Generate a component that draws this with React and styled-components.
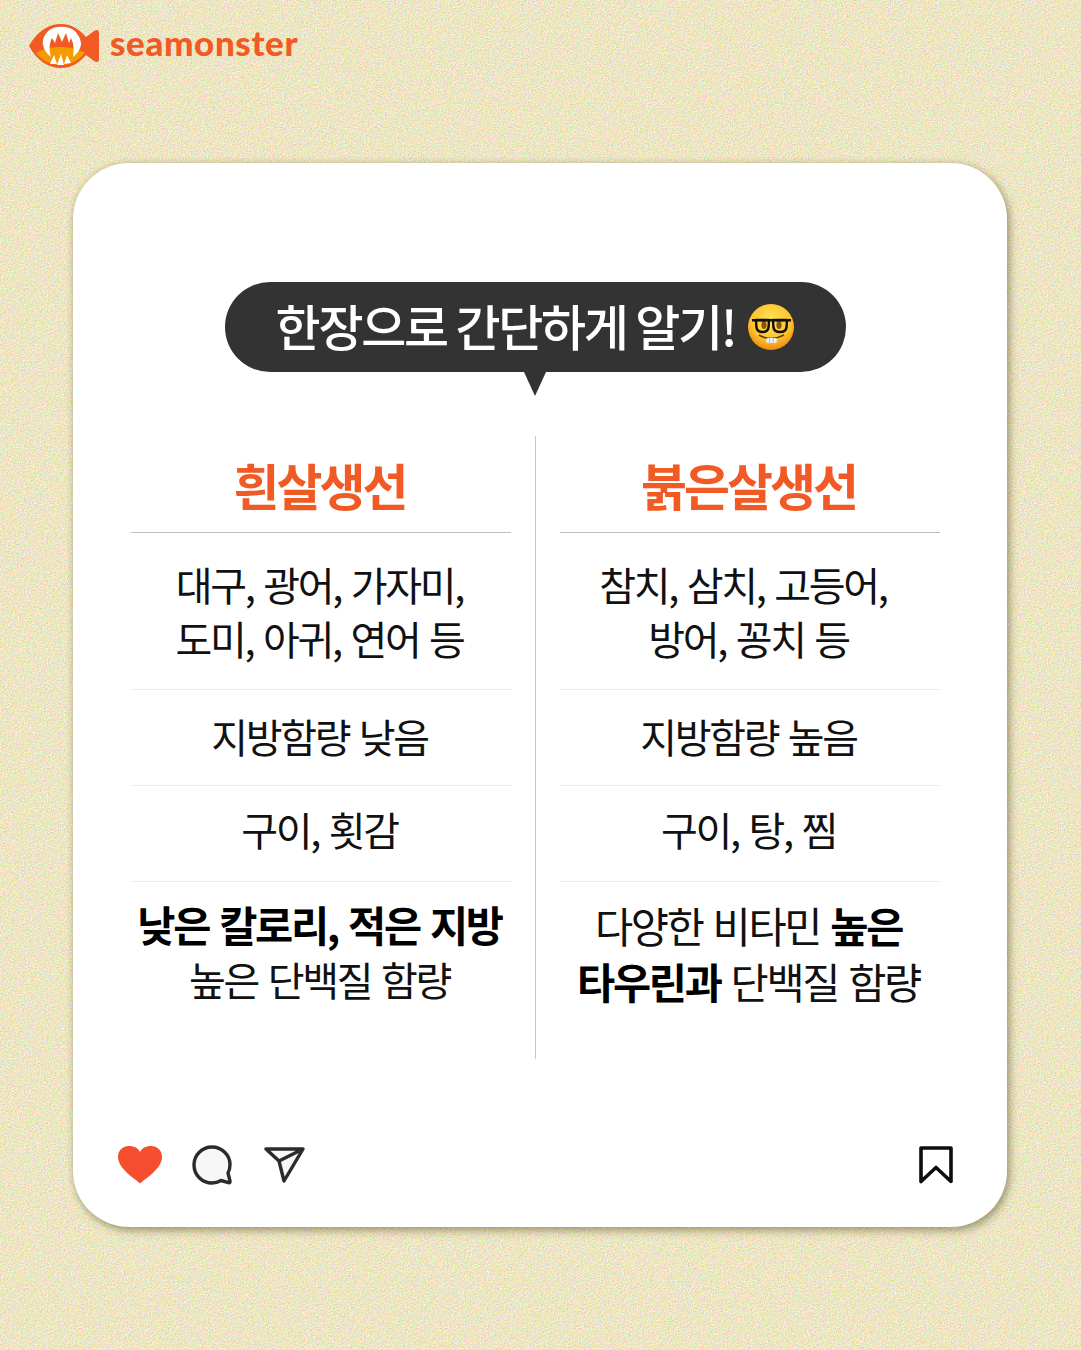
import React from 'react'
import styled, { createGlobalStyle } from 'styled-components'

const noise = `data:image/svg+xml,${encodeURIComponent(
  `<svg xmlns='http://www.w3.org/2000/svg' width='500' height='500'><filter id='n' x='0' y='0' width='100%' height='100%' color-interpolation-filters='sRGB'><feTurbulence type='fractalNoise' baseFrequency='0.7' numOctaves='3' stitchTiles='stitch'/><feColorMatrix type='matrix' values='0.42 0 0 0 0.72  0 0.36 0 0 0.72  0 0 0.45 0 0.54  0 0 0 0 1'/></filter><rect width='500' height='500' filter='url(#n)'/></svg>`
)}`

const GlobalStyle = createGlobalStyle`
  html, body {
    margin: 0;
    padding: 0;
  }
  body {
    font-family: "Noto Sans CJK KR", "Noto Sans", sans-serif;
    background: #ece5c4;
  }
`

const columns = [
  {
    title: '흰살생선',
    rows: [
      { lines: [['대구, 광어, 가자미,'], ['도미, 아귀, 연어 등']], height: 157, lift: 1 },
      { lines: [['지방함량 낮음']], height: 96, lift: 4 },
      { lines: [['구이, 횟감']], height: 96, lift: 10 },
      {
        lines: [[{ b: '낮은 칼로리, 적은 지방' }], ['높은 단백질 함량']],
        height: 177,
        lift: 38,
      },
    ],
  },
  {
    title: '붉은살생선',
    rows: [
      { lines: [{ parts: ['참치, 삼치, 고등어,'], pull: 11 }, ['방어, 꽁치 등']], height: 157, lift: 1 },
      { lines: [['지방함량 높음']], height: 96, lift: 4 },
      { lines: [['구이, 탕, 찜']], height: 96, lift: 10 },
      {
        lines: [
          ['다양한 비타민 ', { b: '높은' }],
          [{ b: '타우린과' }, ' 단백질 함량'],
        ],
        height: 177,
        lift: 35,
        large: true,
      },
    ],
  },
]

const FishLogo = () => (
  <svg width="72" height="46" viewBox="0 0 72 46">
    <path
      d="M1 23 C9 8 21 1 33 1 C44 1 52 7 58 14 L66 8 C69 6 71 7 71 10 L71 36 C71 39 69 40 66 38 L58 32 C52 39 44 45 33 45 C21 45 9 38 1 23 Z"
      fill="#f15a24"
    />
    <path d="M8 30 C20 22 44 22 57 30 C50 38 42 42 33 42 C24 42 14 38 8 30 Z" fill="#f59a00" />
    <path d="M23 6 C17 10 14 16 15 22 C16 27 19 31 23 34 C21 27 21 21 24 15 L27 20 L30 10 L34 19 L38 10 L41 20 L43 15 C46 21 46 27 45 34 C49 31 52 27 53 22 C53 16 50 10 44 6 C38 3 29 3 23 6 Z" fill="#fff" />
    <path d="M22 41 L26 32 L29 41 Z M29 42 L33 31 L36 42 Z M36 41 L39 32 L43 40 Z" fill="#fff" />
  </svg>
)

const NerdEmoji = () => (
  <svg width="48" height="48" viewBox="0 0 48 48">
    <defs>
      <radialGradient id="face" cx="50%" cy="35%" r="65%">
        <stop offset="0%" stopColor="#ffe45a" />
        <stop offset="65%" stopColor="#fdc52c" />
        <stop offset="100%" stopColor="#ee8a10" />
      </radialGradient>
    </defs>
    <circle cx="24" cy="24" r="23" fill="url(#face)" />
    <ellipse cx="17" cy="22" rx="2.6" ry="4" fill="#8a5508" />
    <ellipse cx="32" cy="22" rx="2.6" ry="4" fill="#8a5508" />
    <path d="M5 16 H44 V18.4 H5 Z" fill="#111" />
    <path
      d="M9 17 H22 L21.6 24 Q21 29 15.5 29 Q10 29 9.4 24 Z M26 17 H40 L39.6 24 Q39 29 33 29 Q27 29 26.4 24 Z"
      fill="none"
      stroke="#111"
      strokeWidth="2.4"
      strokeLinejoin="round"
    />
    <path d="M12 32 Q24 39 37 32" stroke="#6b3d06" strokeWidth="1.6" fill="none" />
    <rect x="19" y="35" width="11" height="5" rx="2" fill="#eee" />
    <path d="M22.6 35 V40 M26.2 35 V40" stroke="#aaa" strokeWidth="0.7" />
  </svg>
)

const HeartIcon = () => (
  <svg width="46" height="40" viewBox="0 0 46 40">
    <path
      d="M23 38.5 C19 34.5 1 24 1 12 C1 5 6 1 12 1 C17 1 21 3 23 7 C25 3 29 1 34 1 C40 1 45 5 45 12 C45 24 27 34.5 23 38.5 Z"
      fill="#f44e2f"
    />
  </svg>
)

const CommentIcon = () => (
  <svg width="45" height="44" viewBox="0 0 45 44">
    <path
      d="M21 4 C31 4 39 12 39 21.5 C39 25 38.3 27.5 37 30 L39 38 C39.3 39.5 38.5 40 37.5 39.7 L30 37.5 C27.5 39 24.5 40 21 40 C11 40 3 32 3 22 C3 12 11 4 21 4 Z"
      fill="#f7f7f7"
      stroke="#2b2b2b"
      strokeWidth="3.4"
      strokeLinejoin="round"
    />
  </svg>
)

const SendIcon = () => (
  <svg width="42" height="38" viewBox="0 0 42 38">
    <path
      d="M2 3 L39 3 L20 35 L15 15 Z M15 15 L39 3"
      fill="#f7f7f7"
      stroke="#2b2b2b"
      strokeWidth="3.4"
      strokeLinejoin="round"
    />
  </svg>
)

const BookmarkIcon = () => (
  <svg width="36" height="38" viewBox="0 0 36 38">
    <path
      d="M3 2 H33 V35.5 L18 21.5 L3 35.5 Z"
      fill="none"
      stroke="#0d0d0d"
      strokeWidth="3.6"
      strokeLinejoin="round"
    />
  </svg>
)

const App = () => (
  <Page>
    <GlobalStyle />
    <Brand>
      <FishLogo />
      <BrandName>seamonster</BrandName>
    </Brand>
    <Card>
      <Bubble>
        <BubbleText>한장으로 간단하게 알기!</BubbleText>
        <NerdEmoji />
      </Bubble>
      <Compare>
        {columns.map((col) => (
          <Column key={col.title}>
            <ColumnTitle>{col.title}</ColumnTitle>
            {col.rows.map((row, i) => (
              <Row key={i} $height={row.height} $lift={row.lift} $last={i === col.rows.length - 1}>
                {row.lines.map((line, j) => (
                  <Line key={j} $large={row.large} $pull={line.pull || 0}>
                    {(line.parts || line).map((part, k) =>
                      part.b ? <strong key={k}>{part.b}</strong> : <span key={k}>{part}</span>
                    )}
                  </Line>
                ))}
              </Row>
            ))}
          </Column>
        ))}
      </Compare>
      <Actions>
        <ActionGroup>
          <HeartIcon />
          <CommentIcon />
          <SendIcon />
        </ActionGroup>
        <BookmarkIcon />
      </Actions>
    </Card>
  </Page>
)

export default App

const Page = styled.div`
  width: 1081px;
  height: 1350px;
  box-sizing: border-box;
  padding: 23px 74px 0 73px;
  background-color: #ece5c4;
  background-image: url("${noise}");
  overflow: hidden;
`

const Brand = styled.div`
  display: flex;
  align-items: center;
  gap: 10px;
  height: 46px;
  margin-left: -45px;
`

const BrandName = styled.span`
  font-family: "Lato", sans-serif;
  font-size: 35px;
  line-height: 40px;
  font-weight: 900;
  color: #f15a24;
  letter-spacing: 0.6px;
  margin-bottom: 8px;
`

const Card = styled.div`
  width: 934px;
  height: 1064px;
  margin-top: 94px;
  box-sizing: border-box;
  padding: 119px 9px 0 0;
  display: flex;
  flex-direction: column;
  align-items: center;
  background: #fff;
  border-radius: 56px;
  box-shadow: 0 0 6px rgba(90, 80, 40, 0.2), 3px 4px 8px rgba(90, 80, 40, 0.45);
`

const Bubble = styled.div`
  position: relative;
  width: 621px;
  height: 90px;
  flex: none;
  display: flex;
  align-items: center;
  justify-content: center;
  gap: 12px;
  background: #333;
  border-radius: 45px;

  &::after {
    content: '';
    position: absolute;
    left: 299px;
    top: 90px;
    border-left: 11px solid transparent;
    border-right: 11px solid transparent;
    border-top: 24px solid #333;
  }
`

const BubbleText = styled.span`
  font-size: 49px;
  line-height: 60px;
  font-weight: 500;
  color: #fff;
  letter-spacing: -2.3px;
  margin-bottom: 5px;
`

const Compare = styled.div`
  display: grid;
  grid-template-columns: 404px 405px;
  margin-top: 64px;
  height: 623px;
`

const Column = styled.div`
  box-sizing: border-box;
  &:first-child {
    width: 405px;
    padding-right: 24px;
    border-right: 1.5px solid #c9c9c9;
  }
  &:last-child {
    padding-left: 25px;
    width: 405px;
  }
`

const ColumnTitle = styled.div`
  height: 97px;
  box-sizing: border-box;
  padding-right: 3px;
  display: flex;
  align-items: center;
  justify-content: center;
  font-size: 50px;
  font-weight: 700;
  color: #f15a24;
  letter-spacing: -3px;
  border-bottom: 1px solid #bdbdbd;
`

const Row = styled.div`
  height: ${({ $height }) => $height}px;
  box-sizing: border-box;
  padding: 0 3px ${({ $lift }) => $lift}px 0;
  display: flex;
  flex-direction: column;
  justify-content: center;
  align-items: center;
  border-bottom: ${({ $last }) => ($last ? 'none' : '1px solid #ececec')};
`

const Line = styled.div`
  font-size: ${({ $large }) => ($large ? '41.5px' : '40px')};
  line-height: ${({ $large }) => ($large ? '56px' : '54px')};
  font-weight: 400;
  color: #111;
  letter-spacing: -2.3px;
  word-spacing: 3px;
  white-space: nowrap;
  padding-right: ${({ $pull }) => $pull}px;

  strong {
    font-size: 41.5px;
    font-weight: 700;
    color: #000;
  }
`

const Actions = styled.div`
  width: 100%;
  box-sizing: border-box;
  margin-top: 84px;
  padding: 0 44px 0 44px;
  display: flex;
  align-items: center;
  justify-content: space-between;
`

const ActionGroup = styled.div`
  display: flex;
  align-items: center;
  gap: 28px;
`
